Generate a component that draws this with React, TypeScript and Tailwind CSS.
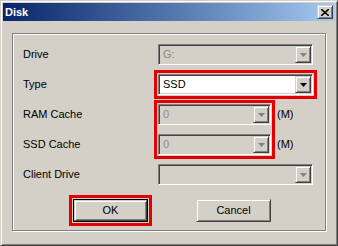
import React from 'react';

const raised =
  'border border-t-[#d4d0c8] border-l-[#d4d0c8] border-r-[#404040] border-b-[#404040] shadow-[inset_1px_1px_#ffffff,inset_-1px_-1px_#808080]';
const sunken =
  'border border-t-[#808080] border-l-[#808080] border-r-[#ffffff] border-b-[#ffffff] shadow-[inset_1px_1px_#404040,inset_-1px_-1px_#d4d0c8]';

const Arrow: React.FC<{ enabled?: boolean }> = ({ enabled }) => (
  <svg width="7" height="4" viewBox="0 0 7 4">
    <polygon points="0,0 7,0 3.5,4" fill={enabled ? '#000000' : '#808080'} />
  </svg>
);

interface ComboProps {
  value?: string;
  enabled?: boolean;
  wide?: boolean;
}

const Combo: React.FC<ComboProps> = ({ value = '', enabled, wide = true }) => (
  <div
    className={`${sunken} ${wide ? 'w-[155px]' : 'w-[113px]'} ${
      enabled ? 'bg-white text-black' : 'bg-[#d4d0c8] text-[#8a8a8a]'
    } flex h-[21px] items-center p-[1px]`}
  >
    <span className="flex-1 pl-[3px] leading-none">{value}</span>
    <div className={`${raised} flex h-[17px] w-[16px] items-center justify-center bg-[#d4d0c8]`}>
      <Arrow enabled={enabled} />
    </div>
  </div>
);

const Row: React.FC<{ label: string; children: React.ReactNode }> = ({ label, children }) => (
  <div className="flex h-[21px] items-center">
    <span className="w-[135px] shrink-0">{label}</span>
    {children}
  </div>
);

const Highlight: React.FC = () => (
  <div className="pointer-events-none absolute -inset-[4px] border-[3px] border-[#e40000]" />
);

export default function App() {
  return (
    <div
      className="h-[246px] w-[338px] border border-t-[#d4d0c8] border-l-[#d4d0c8] border-r-[#404040] border-b-[#404040] bg-[#d4d0c8] p-[2px] text-[11px] text-black shadow-[inset_1px_1px_#ffffff,inset_-1px_-1px_#808080]"
      style={{ fontFamily: '"Liberation Sans", Arial, sans-serif' }}
    >
      {/* title bar */}
      <div className="flex h-[18px] items-center justify-between bg-gradient-to-r from-[#0a246a] to-[#a6caf0] pl-[2px] pr-[2px]">
        <span className="font-bold text-white">Disk</span>
        <div className={`${raised} flex h-[14px] w-[16px] items-center justify-center bg-[#d4d0c8]`}>
          <svg width="8" height="7" viewBox="0 0 8 7">
            <path d="M0 0 L8 7 M8 0 L0 7" stroke="#000" strokeWidth="1.6" />
          </svg>
        </div>
      </div>

      {/* group box */}
      <div className="ml-[9px] mt-[12px] h-[198px] w-[314px] border border-[#808080] pl-[10px] pt-[10px] shadow-[inset_1px_1px_#ffffff,1px_1px_#ffffff]">
        <div className="relative flex flex-col gap-[9px]">
          <Row label="Drive">
            <Combo value="G:" />
          </Row>
          <Row label="Type">
            <div className="relative">
              <Combo value="SSD" enabled />
              <Highlight />
            </div>
          </Row>
          <div className="flex">
            <div className="flex w-[135px] flex-col gap-[9px]">
              <span className="flex h-[21px] items-center">RAM Cache</span>
              <span className="flex h-[21px] items-center">SSD Cache</span>
            </div>
            <div className="relative flex flex-col gap-[9px]">
              <Combo value="0" wide={false} />
              <Combo value="0" wide={false} />
              <Highlight />
            </div>
            <div className="ml-[6px] flex flex-col gap-[9px]">
              <span className="flex h-[21px] items-center">(M)</span>
              <span className="flex h-[21px] items-center">(M)</span>
            </div>
          </div>
          <Row label="Client Drive">
            <Combo />
          </Row>
        </div>

        <div className="mt-[14px] flex gap-[48px] pl-[50px]">
          <div className="relative">
            <div className="border border-black">
              <div className={`${raised} flex h-[21px] w-[73px] items-center justify-center bg-[#d4d0c8]`}>OK</div>
            </div>
            <Highlight />
          </div>
          <div className={`${raised} flex h-[23px] w-[75px] items-center justify-center bg-[#d4d0c8]`}>Cancel</div>
        </div>
      </div>
    </div>
  );
}
